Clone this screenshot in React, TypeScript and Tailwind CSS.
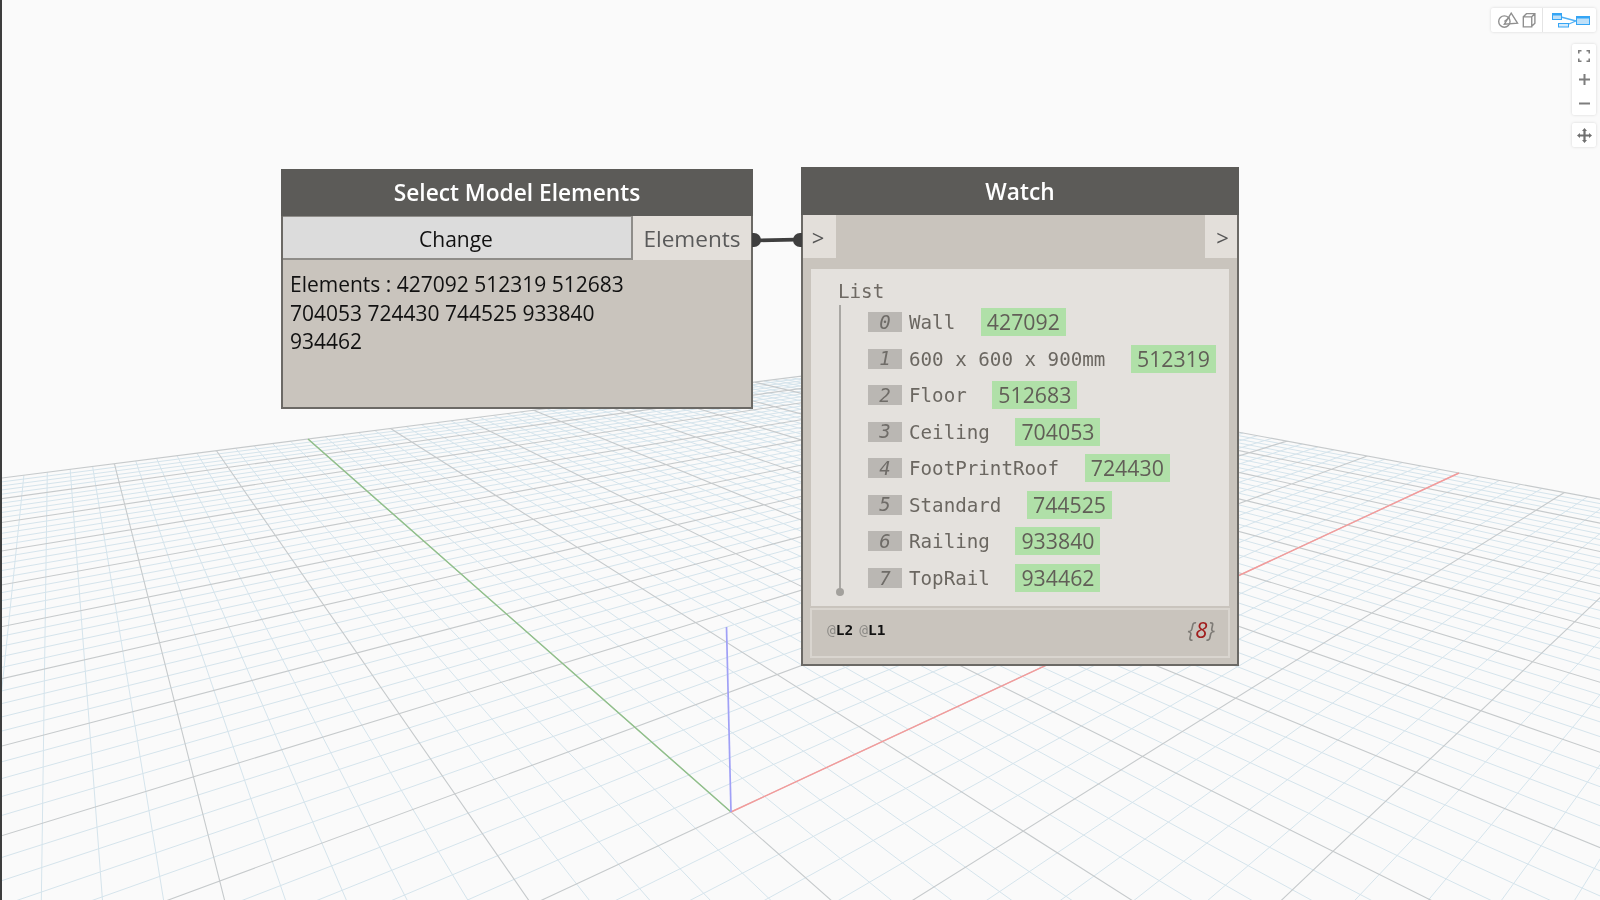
const MONO = { fontFamily: '"DejaVu Sans Mono", monospace' }

const WATCH_ROWS = [
  { label: 'Wall', value: '427092' },
  { label: '600 x 600 x 900mm', value: '512319' },
  { label: 'Floor', value: '512683' },
  { label: 'Ceiling', value: '704053' },
  { label: 'FootPrintRoof', value: '724430' },
  { label: 'Standard', value: '744525' },
  { label: 'Railing', value: '933840' },
  { label: 'TopRail', value: '934462' },
]

// square to quad homography, corners of the ground plane quadrant taken from the picture
const P00 = [731, 812]
const P10 = [1459, 473]
const P11 = [881, 366]
const P01 = [308, 439]

function makeProjection() {
  const [x0, y0] = P00
  const [x1, y1] = P10
  const [x2, y2] = P11
  const [x3, y3] = P01
  const dx1 = x1 - x2
  const dx2 = x3 - x2
  const dy1 = y1 - y2
  const dy2 = y3 - y2
  const sx = x0 - x1 + x2 - x3
  const sy = y0 - y1 + y2 - y3
  const den = dx1 * dy2 - dx2 * dy1
  const g = (sx * dy2 - dx2 * sy) / den
  const h = (dx1 * sy - sx * dy1) / den
  const a = x1 - x0 + g * x1
  const b = x3 - x0 + h * x3
  const d = y1 - y0 + g * y1
  const e = y3 - y0 + h * y3
  // lines that run behind the camera are cut where w gets too small
  const segment = (u0: number, v0: number, u1: number, v1: number) => {
    const w0 = g * u0 + h * v0 + 1
    const w1 = g * u1 + h * v1 + 1
    const eps = 0.06
    let s0 = 0
    let s1 = 1
    if (w0 < eps && w1 < eps) return ''
    if (w0 < eps) s0 = (eps - w0) / (w1 - w0)
    if (w1 < eps) s1 = (eps - w0) / (w1 - w0)
    const pt = (s: number) => {
      const u = u0 + (u1 - u0) * s
      const v = v0 + (v1 - v0) * s
      const w = g * u + h * v + 1
      return `${((a * u + b * v + x0) / w).toFixed(1)} ${((d * u + e * v + y0) / w).toFixed(1)}`
    }
    return `M${pt(s0)}L${pt(s1)}`
  }
  return segment
}

function GroundGrid() {
  const segment = makeProjection()
  const N = 50
  const minor: string[] = []
  const major: string[] = []
  for (let i = -N; i <= N; i++) {
    const t = i / N
    const seg = segment(t, -1, t, 1) + segment(-1, t, 1, t)
    if (i % 5 === 0) major.push(seg)
    else minor.push(seg)
  }
  return (
    <svg className="absolute inset-0" width="1600" height="900" viewBox="0 0 1600 900">
      <path d={minor.join('')} stroke="#d5e4ec" strokeWidth="1" fill="none" />
      <path d={major.join('')} stroke="#c6cacc" strokeWidth="1.1" fill="none" />
      <line x1="731" y1="812" x2="308" y2="439" stroke="#8fc088" strokeWidth="1.4" />
      <line x1="731" y1="812" x2="1459" y2="473" stroke="#f49a9a" strokeWidth="1.4" />
      <line x1="731" y1="812" x2="726.5" y2="627" stroke="#a0a0f6" strokeWidth="1.7" />
    </svg>
  )
}

function Connector() {
  return (
    <svg className="absolute left-[750px] top-[230px]" width="54" height="20" viewBox="0 0 54 20">
      <path d="M2 3h2a7 7 0 0 1 0 14H2z" fill="#3f3f3f" />
      <path d="M52 3h-2a7 7 0 0 0 0 14h2z" fill="#3f3f3f" />
      <line x1="8" y1="10.4" x2="46" y2="9.6" stroke="#3f3f3f" strokeWidth="3.6" />
    </svg>
  )
}

function SelectNode() {
  return (
    <div className="absolute left-[281px] top-[169px] w-[472px] h-[240px] flex flex-col border-2 border-[#6b6965] bg-[#c9c4bd] border-t-0 font-['Open_Sans',sans-serif]">
      <div className="h-[47px] -mx-[2px] pt-[2px] bg-[#5c5b58] flex items-center justify-center text-[22.7px] font-semibold text-white">
        Select Model Elements
      </div>
      <div className="flex h-[44px]">
        <div className="w-[350px] bg-[#dcdcdc] border-t border-r-2 border-b-2 border-[#8f8d89] flex items-center justify-center pt-[4px] pr-[2px] text-[21px] text-[#111]">
          Change
        </div>
        <div className="flex-1 bg-[#e3dfda] flex items-center justify-center pt-[2px] text-[22.6px] text-[#5a5a5a]">
          Elements
        </div>
      </div>
      <div className="pl-[7px] pt-[10px] text-[21px] leading-[28.7px] text-[#111]">
        Elements : 427092 512319 512683
        <br />
        704053 724430 744525 933840
        <br />
        934462
      </div>
    </div>
  )
}

function WatchNode() {
  return (
    <div className="absolute left-[801px] top-[167px] w-[438px] h-[499px] flex flex-col border-2 border-t-0 border-[#6b6965] bg-[#c9c4bd]">
      <div className="h-[48px] shrink-0 -mx-[2px] pt-[2px] bg-[#5c5b58] flex items-center justify-center text-[22.7px] font-semibold text-white font-['Open_Sans',sans-serif]">
        Watch
      </div>
      <div className="h-[43px] shrink-0 flex justify-between font-['Open_Sans',sans-serif] text-[22px] text-[#555]">
        <div className="w-[33px] bg-[#e3dfda] flex items-center justify-center pt-[2px] pr-[3px]">&gt;</div>
        <div className="w-[32px] bg-[#e3dfda] flex items-center justify-center pt-[2px] pl-[3px]">&gt;</div>
      </div>
      <div className="mt-[11px] mx-[8px] h-[337px] shrink-0 bg-[#e4e1dd] relative pl-[27px] pt-[9px] text-[#6b6761]" style={MONO}>
        <div className="text-[19.2px] leading-[28px] text-[#6f6a64]">List</div>
        <div className="absolute left-[28px] top-[36px] h-[288px] w-[2px] bg-[#a9a7a3]" />
        <div className="absolute left-[25px] top-[319px] w-[8px] h-[8px] rounded-full bg-[#a3a19d]" />
        <div className="pl-[30px] flex flex-col gap-[8.55px] mt-[2px]">
          {WATCH_ROWS.map((row, i) => (
            <div key={row.value} className="flex items-center h-[28px]">
              <div className="w-[34px] h-[20px] bg-[#bab7b3] flex items-center justify-center text-[19px] italic text-[#6f6c68]">
                {i}
              </div>
              <div className="ml-[7px] pt-[2px] text-[19.2px] leading-[28px] whitespace-nowrap text-[#6b6761]">{row.label}</div>
              <div className="ml-[25.6px] w-[85px] h-[28px] bg-[#b0e0a8] flex items-center justify-center text-[#615e57] text-[21.3px] font-['Open_Sans',sans-serif]">
                {row.value}
              </div>
            </div>
          ))}
        </div>
      </div>
      <div className="mt-[2px] mx-[7px] h-[50px] shrink-0 border-2 border-[#d9d5cf] flex items-center justify-between pl-[15px] pr-[13px] pb-[4px] text-[14.5px]" style={MONO}>
        <div className="flex gap-[6px]">
          <span><span className="text-[#8c8a86]">@</span><span className="font-bold text-[#111]">L2</span></span>
          <span><span className="text-[#8c8a86]">@</span><span className="font-bold text-[#111]">L1</span></span>
        </div>
        <div className="italic text-[22px] leading-[24px] mb-[4px] text-[#7d7a75] font-['Open_Sans',sans-serif]">
          {'{'}<span className="text-[#a01c1c]">8</span>{'}'}
        </div>
      </div>
    </div>
  )
}

function CanvasControls() {
  return (
    <div className="absolute top-[8px] right-[4px] flex flex-col items-end gap-[12px]">
      <div className="flex h-[24px] w-[105px] bg-white rounded-[2px] shadow-[0_0_3px_rgba(0,0,0,0.15)]">
        <div className="w-[52px] flex items-center justify-center border-r border-[#e4e4e4]">
          <svg width="40" height="16" viewBox="0 0 38 15" fill="none" stroke="#8f8f8f" strokeWidth="1.3">
            <circle cx="7" cy="9" r="5.4" />
            <path d="M7 9l5-4" />
            <path d="M7 11.5L13.5 1l6 9.5z" />
            <path d="M25 4.5h8v9.5h-8zM25 4.5l3-3h8v9l-3 3M33 4.5l3-3" />
          </svg>
        </div>
        <div className="flex-1 flex items-center justify-center pl-[4px]">
          <svg width="39" height="15" viewBox="0 0 39 15" fill="none">
            <path d="M9 4l15 4M12 13l12-5" stroke="#4fb0f5" strokeWidth="1.3" />
            <rect x="0.5" y="0.5" width="9" height="6" fill="#bfe0f8" stroke="#35a5f5" />
            <rect x="0.5" y="0.5" width="9" height="2" fill="#35a5f5" />
            <rect x="6.5" y="10.5" width="10" height="3.5" fill="#d5ebfb" stroke="#35a5f5" />
            <rect x="24.5" y="3.5" width="13" height="8" fill="#bfe0f8" stroke="#35a5f5" />
            <rect x="24.5" y="3.5" width="13" height="2" fill="#35a5f5" />
          </svg>
        </div>
      </div>
      <div className="w-[24px] h-[71px] bg-white rounded-[2px] shadow-[0_0_3px_rgba(0,0,0,0.15)] flex flex-col items-center pt-[6px] gap-[12px]">
        <svg width="12" height="12" viewBox="0 0 12 12" fill="none" stroke="#7d7d7d" strokeWidth="1.7">
          <path d="M0.7 3.5V0.7H3.5M8.5 0.7h2.8v2.8M11.3 8.5v2.8H8.5M3.5 11.3H0.7V8.5" />
        </svg>
        <svg width="11" height="11" viewBox="0 0 11 11" stroke="#7d7d7d" strokeWidth="2">
          <path d="M0 5.5h11M5.5 0v11" />
        </svg>
        <svg className="mt-[1px]" width="11" height="11" viewBox="0 0 11 11" stroke="#7d7d7d" strokeWidth="2">
          <path d="M0 5.5h11" />
        </svg>
      </div>
      <div className="-mt-[4px] w-[24px] h-[24px] bg-white rounded-[2px] shadow-[0_0_3px_rgba(0,0,0,0.15)] flex items-center justify-center">
        <svg width="15" height="15" viewBox="0 0 15 15" fill="#707070">
          <path d="M7.5 0L10 3H8.6v3.4H12V5l3 2.5L12 10V8.6H8.6V12H10l-2.5 3L5 12h1.4V8.6H3V10L0 7.5 3 5v1.4h3.4V3H5z" />
        </svg>
      </div>
    </div>
  )
}

export default function App() {
  return (
    <div className="relative w-[1600px] h-[900px] overflow-hidden bg-[#fafafa] blur-[0.4px]">
      <GroundGrid />
      <div className="absolute left-0 top-0 bottom-0 w-[2px] bg-[#3d3d3d]" />
      <SelectNode />
      <WatchNode />
      <Connector />
      <CanvasControls />
    </div>
  )
}
